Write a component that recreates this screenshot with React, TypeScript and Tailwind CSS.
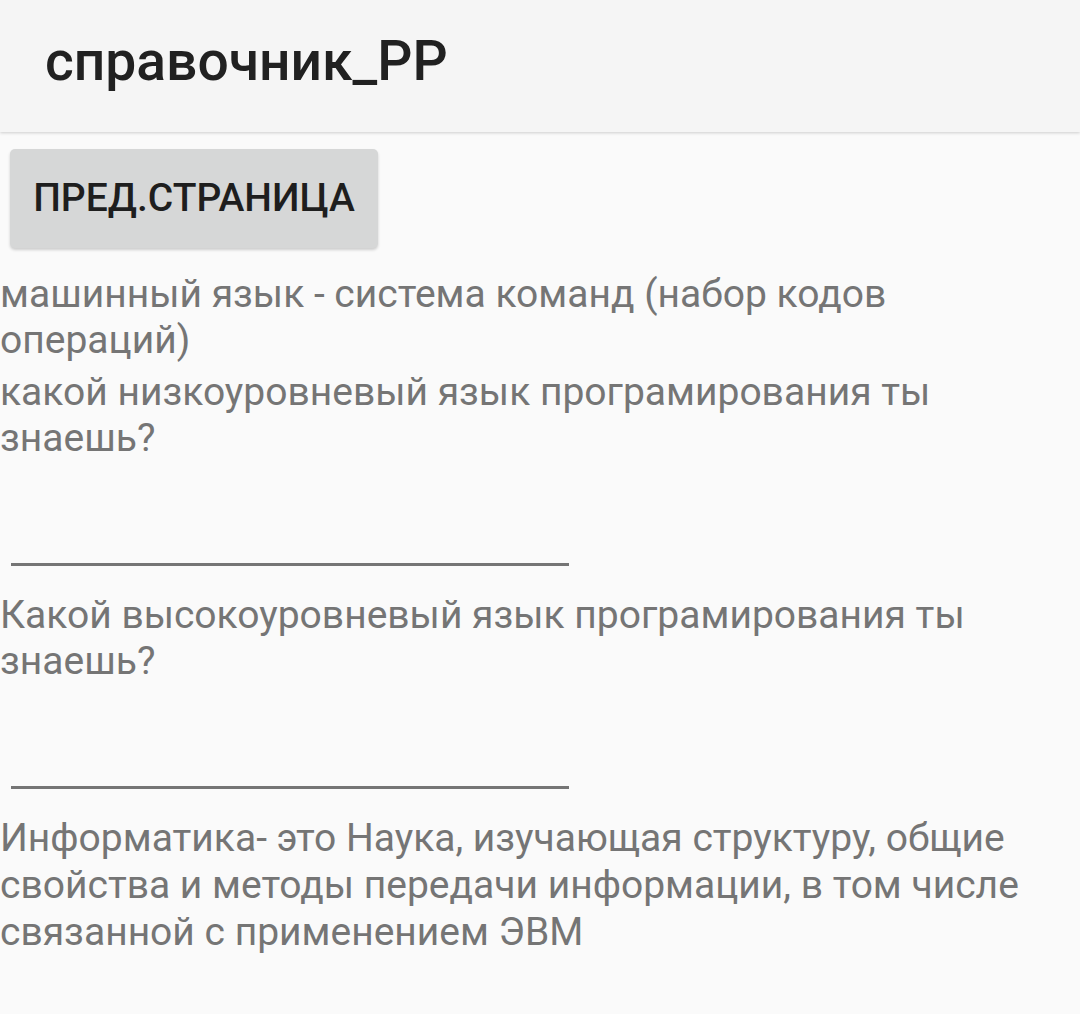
import React from 'react';

const font = { fontFamily: 'Roboto, "Noto Sans", sans-serif' };

const Underline = () => (
  <div className="h-[106px] flex items-end px-[11px]">
    <div className="w-[558px] h-[3px] bg-[#757575] mb-[1px]" />
  </div>
);

const App = () => {
  return (
    <div className="w-[1080px] h-[1014px] bg-[#fafafa] overflow-hidden" style={font}>
      <header className="h-[132px] bg-[#f5f5f5] flex items-center pl-[45px] shadow-[0_1px_3px_rgba(0,0,0,0.18)] relative">
        <h1 className="text-[55.2px] font-medium text-[#212121] pb-[10px]">справочник_PP</h1>
      </header>
      <div className="flex flex-col">
        <div className="pt-[17px] pl-[10px]">
          <button className="w-[368px] h-[99px] bg-[#d6d7d7] rounded-[5px] shadow-[0_2px_3px_rgba(0,0,0,0.18)] text-[39px] font-medium text-[#1e1e1e] uppercase">
            ПРЕД.СТРАНИЦА
          </button>
        </div>
        <div className="pt-[23px] flex flex-col">
          <p className="text-[39px] leading-[46px] text-[#757575]">
            машинный язык - система команд (набор кодов операций)
          </p>
          <p className="text-[39px] leading-[46px] text-[#757575] mt-[6px] pr-[140px]">
            какой низкоуровневый язык програмирования ты знаешь?
          </p>
          <Underline />
          <div className="mt-[25px]">
            <p className="text-[39px] leading-[46px] text-[#757575] pr-[100px]">
              Какой высокоуровневый язык програмирования ты знаешь?
            </p>
            <Underline />
          </div>
          <p className="text-[39px] leading-[47px] text-[#757575] mt-[25px]">
            Информатика- это Наука, изучающая структуру, общие свойства и методы передачи информации, в том числе связанной с применением ЭВМ
          </p>
        </div>
      </div>
    </div>
  );
};

export default App;
